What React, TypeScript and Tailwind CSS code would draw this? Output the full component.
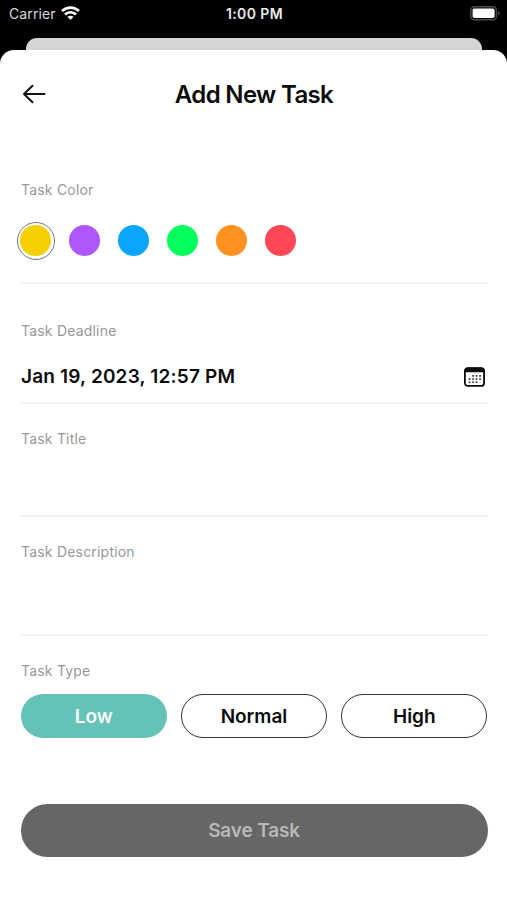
import { useState } from 'react';
import clsx from 'clsx';

const COLORS = [
    { id: 'yellow', bg: 'bg-[#f6cf00]' },
    { id: 'purple', bg: 'bg-[#af57ff]' },
    { id: 'blue', bg: 'bg-[#0aa5ff]' },
    { id: 'green', bg: 'bg-[#05ff5c]' },
    { id: 'orange', bg: 'bg-[#ff9220]' },
    { id: 'red', bg: 'bg-[#ff4757]' },
];

const TYPES = ['Low', 'Normal', 'High'];

function StatusBar() {
    return (
        <div className="grid grid-cols-3 items-center h-[28px] pl-[9px] pr-[7px] text-white">
            <div className="flex items-center gap-[5px]">
                <span className="text-[14px] leading-none tracking-[0.1px] text-[#d8d8d8]">Carrier</span>
                <svg className="-mt-[2px]" width="19" height="14" viewBox="0 0 19 14" fill="none" stroke="white" strokeWidth="2.7">
                    <path d="M1 5a12.2 12.2 0 0 1 17 0" />
                    <path d="M4 8.5a7.8 7.8 0 0 1 11 0" />
                    <path d="M9.5 13.8 6.5 11a4.2 4.2 0 0 1 6 0z" fill="white" stroke="none" />
                </svg>
            </div>
            <span className="text-center text-[14px] leading-none font-semibold tracking-[0.4px] text-[#ececec]">1:00 PM</span>
            <svg className="justify-self-end -mt-[2px]" width="30" height="15" viewBox="0 0 30 15">
                <rect x="0.8" y="0.8" width="25.6" height="13" rx="3.6" fill="none" stroke="#4c4c4c" strokeWidth="1.4" />
                <rect x="2.6" y="2.6" width="22" height="9.4" rx="1.8" fill="white" />
                <path d="M28 5v4.6c1-.4 1.6-1.3 1.6-2.3S29 5.4 28 5z" fill="#4c4c4c" />
            </svg>
        </div>
    );
}

function CalendarIcon() {
    const dots = [
        [9, 8.8], [12.5, 8.8], [16, 8.8],
        [5.5, 12], [9, 12], [12.5, 12], [16, 12],
        [5.5, 15.2], [9, 15.2], [12.5, 15.2],
    ];
    return (
        <svg width="21" height="20" viewBox="0 0 21 20">
            <rect x="0.9" y="1.1" width="19.2" height="17.8" rx="3" fill="white" stroke="#0b0b0b" strokeWidth="1.8" />
            <path d="M0.5 5.2V4A3.5 3.5 0 0 1 4 .5h13A3.5 3.5 0 0 1 20.5 4v1.2z" fill="#0b0b0b" />
            {dots.map(([x, y]) => (
                <rect key={`${x}-${y}`} x={x - 0.8} y={y - 0.8} width="1.7" height="1.7" fill="#333" />
            ))}
        </svg>
    );
}

function Label({ children }: { children: string }) {
    return <div className="h-5 pl-[0.5px] text-[14px] leading-5 tracking-[0.2px] text-[#989898]">{children}</div>;
}

export default function App() {
    const [color, setColor] = useState('yellow');
    const [type, setType] = useState('Low');

    return (
        <div className="w-full h-[900px] overflow-hidden bg-black font-[Inter,sans-serif]">
            <StatusBar />
            {/* edge of the screen behind the sheet */}
            <div className="mt-[10px] ml-[26px] mr-[25px] h-3 rounded-t-[11px] bg-[#d5d5d7]" />

            <div className="h-[850px] rounded-t-[14px] bg-white pl-[20.5px] pr-[19.5px]">
                <header className="grid grid-cols-[24px_1fr_24px] items-center h-[88px]">
                    <button className="pl-px">
                        <svg width="24" height="20" viewBox="0 0 24 20" fill="none" stroke="#111" strokeWidth="2" strokeLinecap="round" strokeLinejoin="round">
                            <path d="M22.5 10H2M10.5 1.7 2 10l8.5 8.3" />
                        </svg>
                    </button>
                    <h1 className="pt-px text-center text-[24px] leading-8 font-semibold tracking-[-0.65px] text-[#0b0b0b]">Add New Task</h1>
                </header>

                <section className="h-[146px] pt-[42px] border-b-2 border-[#f1f1f1]">
                    <Label>Task Color</Label>
                    <div className="flex gap-[11px] mt-[21.5px] -ml-1">
                        {COLORS.map((c) => (
                            <button
                                key={c.id}
                                onClick={() => setColor(c.id)}
                                className={clsx(
                                    'flex shrink-0 items-center justify-center size-[38px] rounded-full border',
                                    color === c.id ? 'border-[#777]' : 'border-transparent'
                                )}
                            >
                                <span className={clsx('size-[31px] shrink-0 rounded-full', c.bg)} />
                            </button>
                        ))}
                    </div>
                </section>

                <section className="h-[120px] pt-[37px] border-b-2 border-[#f1f1f1]">
                    <Label>Task Deadline</Label>
                    <div className="flex items-center justify-between mt-[24px] pl-[0.5px] pr-[2.5px]">
                        <span className="text-[19px] leading-6 font-semibold tracking-[0.18px] text-[#0b0b0b]">Jan 19, 2023, 12:57 PM</span>
                        <CalendarIcon />
                    </div>
                </section>

                <section className="h-[113px] pt-[25px] border-b-2 border-[#f1f1f1]">
                    <Label>Task Title</Label>
                </section>

                <section className="h-[119px] pt-[25px] border-b-2 border-[#f1f1f1]">
                    <Label>Task Description</Label>
                </section>

                <section className="pt-[25px]">
                    <Label>Task Type</Label>
                    <div className="grid grid-cols-3 gap-[14px] mt-[13px]">
                        {TYPES.map((t) => (
                            <button
                                key={t}
                                onClick={() => setType(t)}
                                className={clsx(
                                    'h-11 pt-[2px] rounded-full text-[19px] font-semibold',
                                    type === t ? 'bg-[#64c3b6] text-white' : 'border-[1.5px] border-[#333] text-[#0b0b0b]'
                                )}
                            >
                                {t}
                            </button>
                        ))}
                    </div>
                </section>

                <button className="mt-[65.5px] w-full h-[53px] pt-[2px] rounded-full bg-[#666] text-[19px] font-semibold tracking-[-0.15px] text-[#b8b8b8]">
                    Save Task
                </button>
            </div>
        </div>
    );
}
